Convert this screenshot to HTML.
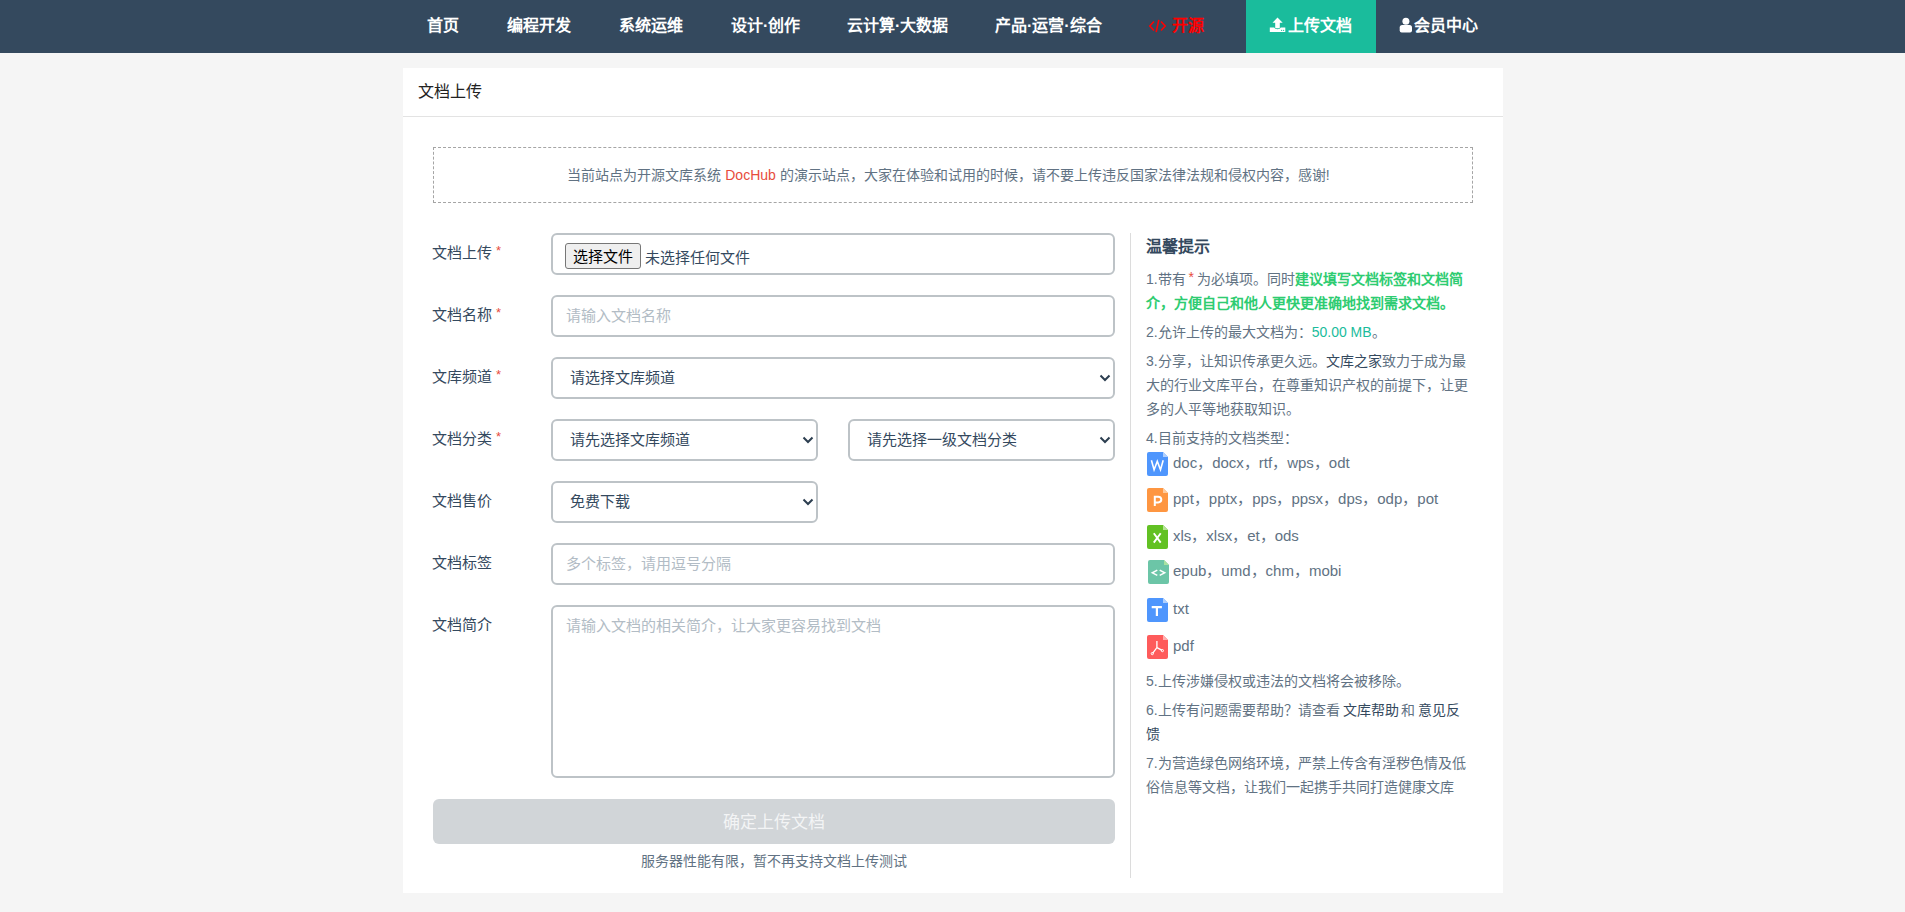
<!DOCTYPE html>
<html lang="zh-CN">
<head>
<meta charset="utf-8">
<title>文档上传</title>
<style>
*{box-sizing:border-box;margin:0;padding:0}
html,body{width:1905px;height:912px;overflow:hidden}
body{background:#f5f5f5;font-family:"Liberation Sans",sans-serif;color:#34495e;position:relative}
#nav{position:absolute;left:0;top:0;width:1905px;height:53px;background:#34495e}
#nav .it{position:absolute;top:0;height:53px;line-height:52px;font-size:16px;font-weight:bold;color:#fff;white-space:nowrap}
#nav .red{color:#ff0000}
#nav .tab{background:#1abc9c}
#nav svg{position:absolute}
#card{position:absolute;left:403px;top:68px;width:1100px;height:825px;background:#fff}
#hd{position:absolute;left:0;top:0;width:1100px;height:49px;border-bottom:1px solid #e3e3e3}
#hd span{position:absolute;left:15px;top:12px;font-size:16px;line-height:24px;color:#222}
#notice{position:absolute;left:30px;top:79px;width:1040px;height:56px;border:1px dashed #a5a5a5;text-align:center;font-size:14px;line-height:54px;color:#617283;padding-right:9px;white-space:nowrap}
#notice b{font-weight:normal;color:#e74c3c}
.lbl{position:absolute;left:29px;font-size:15px;line-height:22px;color:#34495e;white-space:nowrap}
.lbl i{font-style:normal;color:#e74c3c;font-size:13px;position:relative;top:-3px;margin-left:4px}
.fc{position:absolute;left:148px;width:564px;height:42px;border:2px solid #bdc3c7;border-radius:6px;background:#fff;font-size:15px;line-height:38px;padding-left:13px;color:#34495e;white-space:nowrap}
.ph{color:#b2bcc5}
.sel{padding-left:17px}
.chev{position:absolute;right:2px;top:15px}
.fbtn{position:absolute;left:12px;top:8px;width:76px;height:26px;border:1px solid #767676;border-radius:3px;background:#efefef;color:#000;font-size:15px;line-height:26px;text-align:center}
.fnone{position:absolute;left:92px;top:4px;line-height:38px}
#btn{position:absolute;left:30px;top:731px;width:682px;height:45px;border-radius:6px;background:#d1d5d8;color:#f3f4f5;font-size:17px;line-height:47px;text-align:center}
#cap{position:absolute;left:30px;top:783px;width:682px;text-align:center;font-size:14px;line-height:20px;color:#617283}
#side{position:absolute;left:727px;top:165px;width:1px;height:645px;background:#dcdcdc}
#tips{position:absolute;left:743px;top:165px;width:327px;color:#617283;font-size:14px}
#tips h4{font-size:16px;line-height:26px;color:#34495e;font-weight:bold;margin-top:1px;margin-bottom:7px}
#tips p{line-height:24px;margin-bottom:5px}
.g{color:#2ecc71;font-weight:bold}
.t{color:#1abc9c}
.dk{color:#34495e}
.req{color:#e74c3c}
.ft{position:absolute;left:743px;width:340px;height:24px;color:#617283;white-space:nowrap}
.ft svg{position:absolute;left:1px;top:0}
.ft span{position:absolute;left:27px;top:1px;font-size:15px;line-height:20px}
.tp{position:absolute;left:743px;width:327px;color:#617283;font-size:14px;line-height:24px}
</style>
</head>
<body>
<div id="nav">
  <div class="it" style="left:403px;padding:0 24px">首页</div>
  <div class="it" style="left:483px;padding:0 24px">编程开发</div>
  <div class="it" style="left:595px;padding:0 24px">系统运维</div>
  <div class="it" style="left:707px;padding:0 24px">设计·创作</div>
  <div class="it" style="left:823px;padding:0 24px">云计算·大数据</div>
  <div class="it" style="left:971px;padding:0 24px">产品·运营·综合</div>
  <svg style="left:1148px;top:19px" width="19" height="14" viewBox="0 0 19 14"><path d="M6 2.5 L1.8 7 L6 11.5 M13 2.5 L17.2 7 L13 11.5 M10.8 0.8 L8.2 13.2" stroke="#ff0000" stroke-width="1.6" fill="none"/></svg>
  <div class="it red" style="left:1172px">开源</div>
  <div class="it tab" style="left:1246px;width:130px"></div>
  <svg style="left:1269px;top:17px" width="17" height="16" viewBox="0 0 17 16"><path d="M8.5 0.6 L13.7 5.7 L10.8 5.7 L10.8 10.6 Q10.8 11.2 10.2 11.2 L6.8 11.2 Q6.2 11.2 6.2 10.6 L6.2 5.7 L3.5 5.7 Z" fill="#fff"/><path d="M0.8 10.6 H5.2 Q5.8 12.3 8.5 12.3 Q11.2 12.3 11.8 10.6 H16.3 V15.1 H0.8 Z" fill="#fff"/><circle cx="12.6" cy="13.3" r="0.65" fill="#1abc9c"/><circle cx="14.6" cy="13.3" r="0.65" fill="#1abc9c"/></svg>
  <div class="it" style="left:1288px">上传文档</div>
  <svg style="left:1399px;top:17px" width="14" height="16" viewBox="0 0 14 16"><circle cx="6.9" cy="4.2" r="3.5" fill="#fff"/><path d="M0.7 10.6 Q0.7 8.1 3.2 8.1 L10.5 8.1 Q13 8.1 13 10.6 L13 13.6 Q13 15.6 11 15.6 L2.7 15.6 Q0.7 15.6 0.7 13.6 Z" fill="#fff"/></svg>
  <div class="it" style="left:1414px">会员中心</div>
</div>

<div id="card">
  <div id="hd"><span>文档上传</span></div>
  <div id="notice">当前站点为开源文库系统 <b>DocHub</b> 的演示站点，大家在体验和试用的时候，请不要上传违反国家法律法规和侵权内容，感谢!</div>

  <div class="lbl" style="top:174px">文档上传<i>*</i></div>
  <div class="fc" style="top:165px"><div class="fbtn">选择文件</div><div class="fnone">未选择任何文件</div></div>

  <div class="lbl" style="top:236px">文档名称<i>*</i></div>
  <div class="fc ph" style="top:227px">请输入文档名称</div>

  <div class="lbl" style="top:298px">文库频道<i>*</i></div>
  <div class="fc sel" style="top:289px">请选择文库频道<svg class="chev" width="12" height="8" viewBox="0 0 12 8"><path d="M1.5 1.5 L6 6 L10.5 1.5" stroke="#2c3e50" stroke-width="2" fill="none"/></svg></div>

  <div class="lbl" style="top:360px">文档分类<i>*</i></div>
  <div class="fc sel" style="top:351px;width:267px">请先选择文库频道<svg class="chev" width="12" height="8" viewBox="0 0 12 8"><path d="M1.5 1.5 L6 6 L10.5 1.5" stroke="#2c3e50" stroke-width="2" fill="none"/></svg></div>
  <div class="fc sel" style="top:351px;left:445px;width:267px">请先选择一级文档分类<svg class="chev" width="12" height="8" viewBox="0 0 12 8"><path d="M1.5 1.5 L6 6 L10.5 1.5" stroke="#2c3e50" stroke-width="2" fill="none"/></svg></div>

  <div class="lbl" style="top:422px">文档售价</div>
  <div class="fc sel" style="top:413px;width:267px">免费下载<svg class="chev" width="12" height="8" viewBox="0 0 12 8"><path d="M1.5 1.5 L6 6 L10.5 1.5" stroke="#2c3e50" stroke-width="2" fill="none"/></svg></div>

  <div class="lbl" style="top:484px">文档标签</div>
  <div class="fc ph" style="top:475px">多个标签，请用逗号分隔</div>

  <div class="lbl" style="top:546px">文档简介</div>
  <div class="fc ph" style="top:537px;height:173px">请输入文档的相关简介，让大家更容易找到文档</div>

  <div id="btn">确定上传文档</div>
  <div id="cap">服务器性能有限，暂不再支持文档上传测试</div>

  <div id="side"></div>
  <div id="tips">
    <h4>温馨提示</h4>
    <p style="word-spacing:-1px">1.带有 <span class="req" style="position:relative;top:-2px">*</span> 为必填项。同时<span class="g">建议填写文档标签和文档简介，方便自己和他人更快更准确地找到需求文档。</span></p>
    <p>2.允许上传的最大文档为：<span class="t">50.00 MB</span>。</p>
    <p>3.分享，让知识传承更久远。<span class="dk">文库之家</span>致力于成为最大的行业文库平台，在尊重知识产权的前提下，让更多的人平等地获取知识。</p>
    <p>4.目前支持的文档类型：</p>
  </div>

  <!-- file type rows -->
  <div class="ft" style="top:384px"><svg width="21" height="24" viewBox="0 0 21 24"><path d="M2 0 H16 L21 5 V22 Q21 24 19 24 H2 Q0 24 0 22 V2 Q0 0 2 0Z" fill="#4f96fd"/><path d="M16 0 L21 5 H16Z" fill="#b0d0fe"/><path d="M4.4 8.3 L7.1 17.7 L10.3 9.3 L13.5 17.7 L16.2 8.3" stroke="#fff" stroke-width="1.6" stroke-linejoin="miter" fill="none"/></svg><span>doc，docx，rtf，wps，odt</span></div>
  <div class="ft" style="top:420px"><svg width="21" height="24" viewBox="0 0 21 24"><path d="M2 0 H16 L21 5 V22 Q21 24 19 24 H2 Q0 24 0 22 V2 Q0 0 2 0Z" fill="#fe9641"/><path d="M16 0 L21 5 H16Z" fill="#fecb9f"/><path d="M7.8 18 V8.8 H11.2 Q14.3 8.8 14.3 11.6 Q14.3 14.4 11.2 14.4 H7.8" stroke="#fff" stroke-width="2" fill="none"/></svg><span>ppt，pptx，pps，ppsx，dps，odp，pot</span></div>
  <div class="ft" style="top:457px"><svg width="21" height="24" viewBox="0 0 21 24"><path d="M2 0 H16 L21 5 V22 Q21 24 19 24 H2 Q0 24 0 22 V2 Q0 0 2 0Z" fill="#62c123"/><path d="M16 0 L21 5 H16Z" fill="#b6e296"/><path d="M6.8 8.2 L13.7 17.6 M13.7 8.2 L6.8 17.6" stroke="#fff" stroke-width="1.9" fill="none"/></svg><span>xls，xlsx，et，ods</span></div>
  <div class="ft" style="top:492px"><svg style="left:2px" width="21" height="24" viewBox="0 0 21 24"><path d="M2 0 H16 L21 5 V22 Q21 24 19 24 H2 Q0 24 0 22 V2 Q0 0 2 0Z" fill="#6cc5a7"/><path d="M16 0 L21 5 H16Z" fill="#a9e2a0"/><path d="M9.3 10.2 L4.3 12.8 L9.3 15.4 M11.7 10.2 L16.7 12.8 L11.7 15.4" stroke="#fff" stroke-width="1.5" fill="none"/></svg><span>epub，umd，chm，mobi</span></div>
  <div class="ft" style="top:530px"><svg width="21" height="24" viewBox="0 0 21 24"><path d="M2 0 H16 L21 5 V22 Q21 24 19 24 H2 Q0 24 0 22 V2 Q0 0 2 0Z" fill="#4f96fd"/><path d="M16 0 L21 5 H16Z" fill="#b0d0fe"/><path d="M4.7 9.05 H14.9 M9.9 9 V17.9" stroke="#fff" stroke-width="2.2" fill="none"/></svg><span>txt</span></div>
  <div class="ft" style="top:567px"><svg width="21" height="24" viewBox="0 0 21 24"><path d="M2 0 H16 L21 5 V22 Q21 24 19 24 H2 Q0 24 0 22 V2 Q0 0 2 0Z" fill="#fe5b5b"/><path d="M16 0 L21 5 H16Z" fill="#feb0b0"/><path d="M9.9 6 V12.6 L5.6 18.3 M9.9 12.6 L15.2 15.3" stroke="#fff" stroke-width="1.3" fill="none"/><circle cx="5.3" cy="18.6" r="1.1" stroke="#fff" stroke-width="1" fill="none"/><circle cx="15.4" cy="15.6" r="1.1" stroke="#fff" stroke-width="1" fill="none"/></svg><span>pdf</span></div>

  <div class="tp" style="top:601px">5.上传涉嫌侵权或违法的文档将会被移除。</div>
  <div class="tp" style="top:630px;word-spacing:-1px">6.上传有问题需要帮助？请查看 <span class="dk">文库帮助</span> 和 <span class="dk">意见反馈</span></div>
  <div class="tp" style="top:683px">7.为营造绿色网络环境，严禁上传含有淫秽色情及低俗信息等文档，让我们一起携手共同打造健康文库</div>
</div>
</body>
</html>
